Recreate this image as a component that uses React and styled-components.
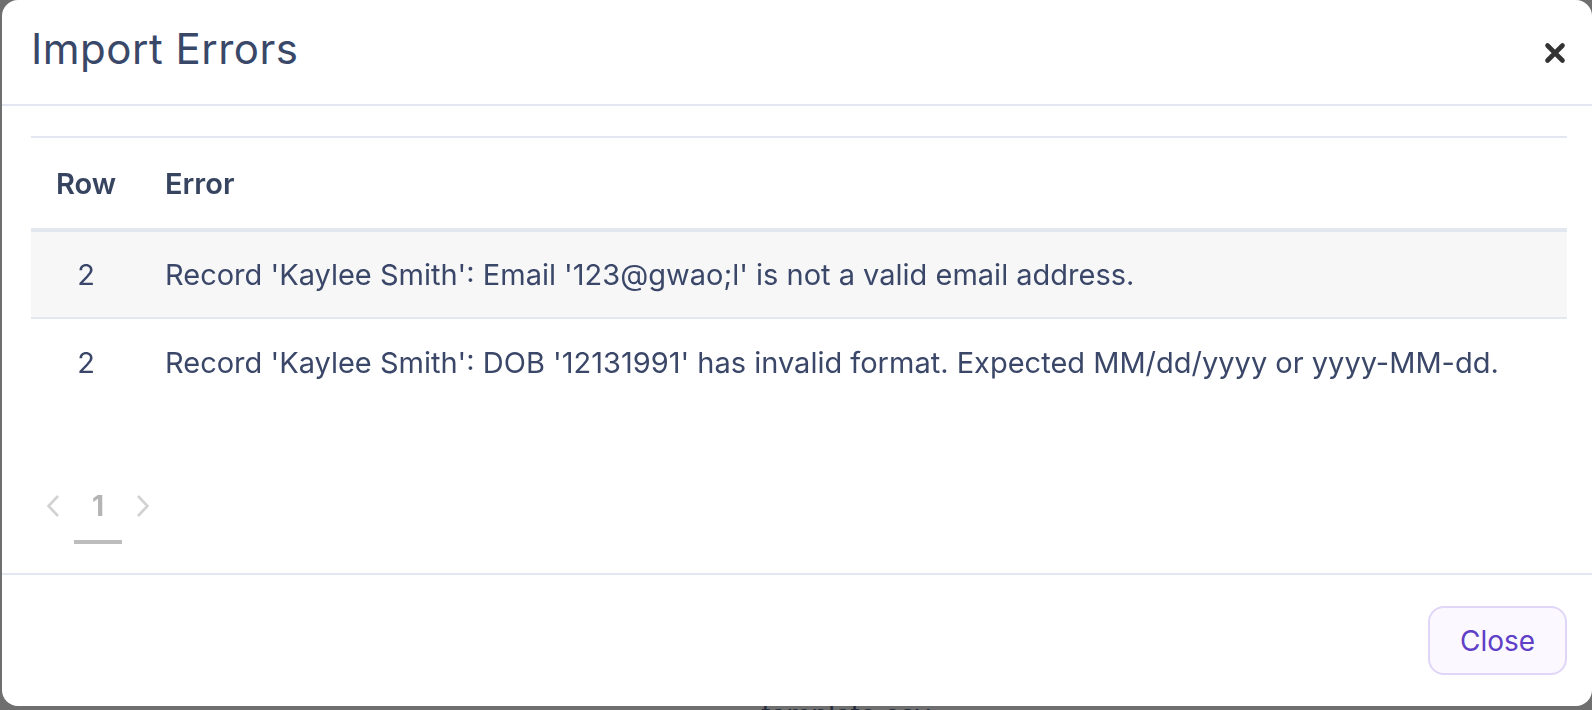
import React from 'react';
import styled, { createGlobalStyle } from 'styled-components';

const GlobalStyle = createGlobalStyle`
    * {
        box-sizing: border-box;
    }

    body {
        margin: 0;
        font-family: Inter, "Liberation Sans", sans-serif;
        background: #6f6f70;
    }
`;

const errors = [
    { row: 2, message: "Record 'Kaylee Smith': Email '123@gwao;l' is not a valid email address." },
    { row: 2, message: "Record 'Kaylee Smith': DOB '12131991' has invalid format. Expected MM/dd/yyyy or yyyy-MM-dd." },
];

const ImportErrors = () => {
    return (
        <>
            <GlobalStyle />
            <Page>
                <BehindText>template.csv</BehindText>
            </Page>

            <Modal role='dialog'>
                <Header>
                    <Title>Import Errors</Title>
                    <CloseIcon aria-label='Close'>
                        <svg width='22' height='22' viewBox='0 0 22 22'>
                            <path d='M3.5 3.5 L18.5 18.5 M18.5 3.5 L3.5 18.5' stroke='#333' strokeWidth='4.6' strokeLinecap='round' />
                        </svg>
                    </CloseIcon>
                </Header>

                <Body>
                    <Table>
                        <thead>
                            <tr>
                                <HeadCell $center>Row</HeadCell>
                                <HeadCell>Error</HeadCell>
                            </tr>
                        </thead>
                        <tbody>
                            {errors.map((e, i) => (
                                <Row key={i} $striped={i % 2 === 0} $last={i === errors.length - 1}>
                                    <Cell $center>{e.row}</Cell>
                                    <Cell>{e.message}</Cell>
                                </Row>
                            ))}
                        </tbody>
                    </Table>

                    {/* Pagination */}
                    <Pager>
                        <Arrow>
                            <svg width='14' height='24' viewBox='0 0 14 24'>
                                <path d='M12 2 L2.5 12 L12 22' fill='none' stroke='#d2d2d2' strokeWidth='2.6' />
                            </svg>
                        </Arrow>
                        <PageItem>1</PageItem>
                        <Arrow>
                            <svg width='14' height='24' viewBox='0 0 14 24'>
                                <path d='M2 2 L11.5 12 L2 22' fill='none' stroke='#d2d2d2' strokeWidth='2.6' />
                            </svg>
                        </Arrow>
                    </Pager>
                </Body>

                <Footer>
                    <CloseButton>Close</CloseButton>
                </Footer>
            </Modal>
        </>
    )
}

export default ImportErrors;

const Page = styled.div`
    height: 710px;
    overflow: hidden;
    display: flex;
    justify-content: center;
    align-items: flex-end;
    padding-left: 100px;
`;

const BehindText = styled.div`
    font-size: 28px;
    line-height: 34px;
    color: #262c3a;
    margin-bottom: -22px;
`;

const Modal = styled.div`
    position: fixed;
    top: 0;
    left: 2px;
    width: 1590px;
    height: 706px;
    background: #fff;
    border-radius: 16px;
    display: flex;
    flex-direction: column;
    color: #3a4768;
`;

const Header = styled.div`
    height: 106px;
    flex-shrink: 0;
    display: flex;
    align-items: center;
    justify-content: space-between;
    padding: 0 26px 7px 29px;
    border-bottom: 2px solid #e4e6f1;
`;

const Title = styled.h2`
    margin: 0;
    font-size: 42px;
    font-weight: 400;
    letter-spacing: 0.5px;
    color: #394868;
`;

const CloseIcon = styled.button`
    border: 0;
    background: none;
    padding: 0;
    margin-top: 8px;
    width: 22px;
    height: 22px;
    cursor: pointer;
    display: flex;
`;

const Body = styled.div`
    flex: 1;
    padding: 30px 25px 0 29px;
`;

const Table = styled.table`
    width: 100%;
    border-collapse: collapse;
    border-top: 2px solid #e4e6f1;
    font-size: 29px;
`;

const HeadCell = styled.th`
    height: 93px;
    font-weight: 600;
    color: #36445f;
    text-align: ${props => props.$center ? 'center' : 'left'};
    width: ${props => props.$center ? '110px' : 'auto'};
    padding: 0 0 0 ${props => props.$center ? '0' : '24px'};
    border-bottom: 4px solid #e3e7ef;
`;

const Row = styled.tr`
    background: ${props => props.$striped ? '#f7f7f8' : '#fff'};
    border-bottom: ${props => props.$last ? 'none' : '2px solid #e4e7ef'};
`;

const Cell = styled.td`
    height: 88px;
    color: #3a4768;
    text-align: ${props => props.$center ? 'center' : 'left'};
    padding: 0 0 0 ${props => props.$center ? '0' : '24px'};
`;

const Pager = styled.div`
    display: flex;
    align-items: flex-start;
    margin-top: 82px;
    padding-left: 7px;
`;

const Arrow = styled.span`
    height: 36px;
    width: 30px;
    display: flex;
    align-items: center;
    justify-content: center;
`;

const PageItem = styled.span`
    width: 48px;
    margin: 0 6px;
    text-align: center;
    font-size: 28px;
    font-weight: 700;
    line-height: 36px;
    padding-bottom: 16px;
    color: #b4b4b4;
    border-bottom: 4px solid #bdbdbd;
`;

const Footer = styled.div`
    height: 133px;
    flex-shrink: 0;
    border-top: 2px solid #e4e6f1;
    display: flex;
    justify-content: flex-end;
    align-items: center;
    padding: 0 25px;
`;

const CloseButton = styled.button`
    width: 139px;
    height: 69px;
    border: 2px solid #e0d6f8;
    border-radius: 16px;
    background: #fbf8ff;
    color: #5e3fc6;
    font-family: Inter, "Liberation Sans", sans-serif;
    font-size: 28px;
    cursor: pointer;
`;
